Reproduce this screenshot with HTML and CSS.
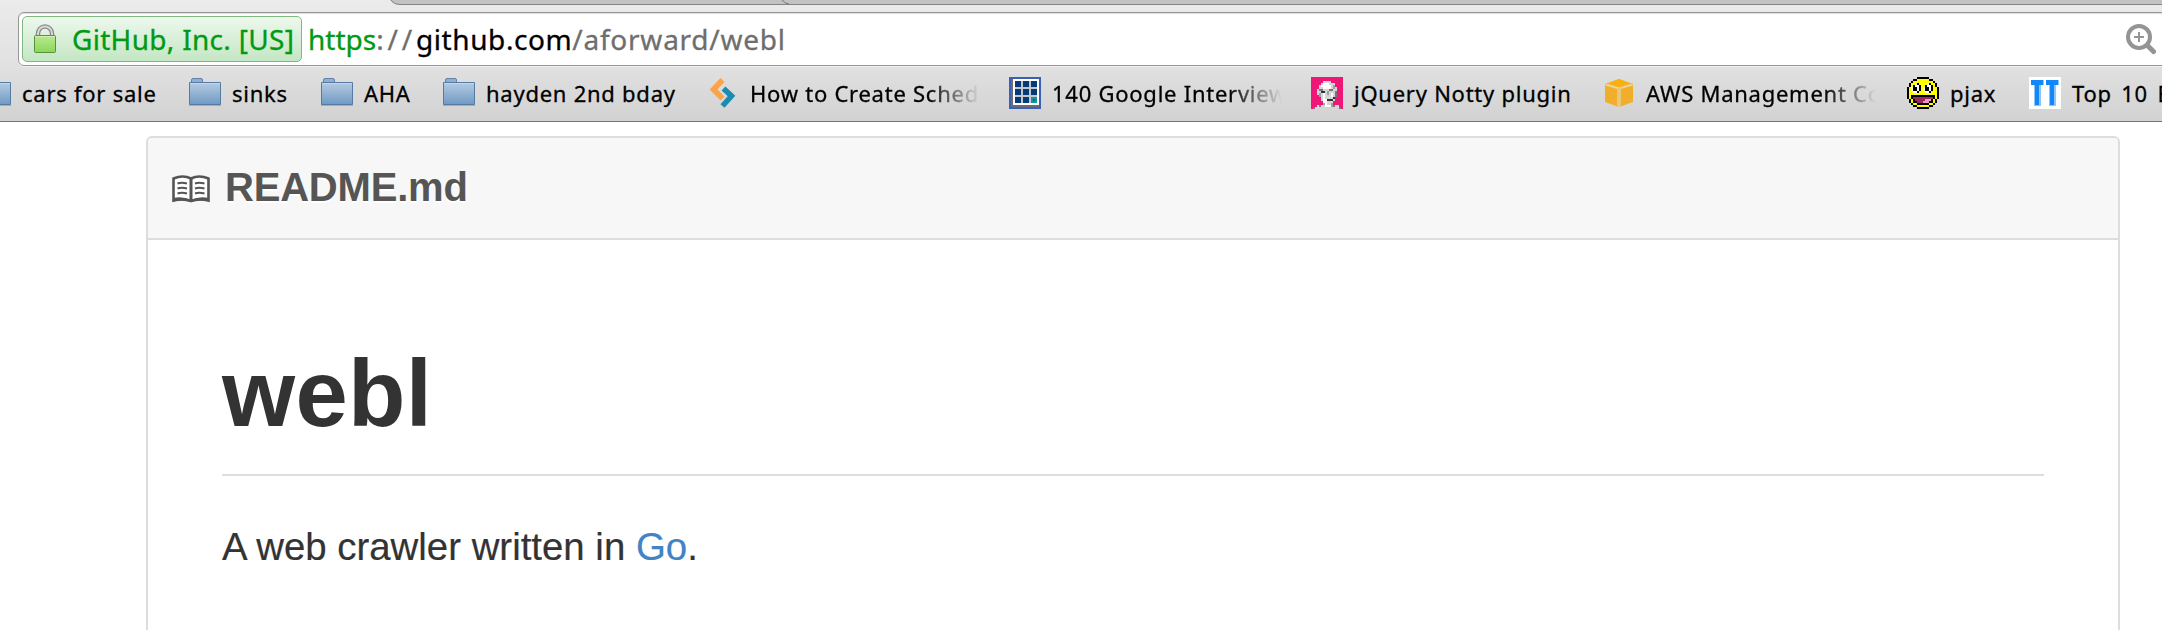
FILE: index.html
```html
<!DOCTYPE html>
<html lang="en">
<head>
<meta charset="utf-8">
<title>aforward/webl</title>
<link rel="stylesheet" href="styles.css">
</head>
<body>
<svg class="defs" width="0" height="0" aria-hidden="true">
  <defs>
    <linearGradient id="folderFill" x1="0" y1="0" x2="0" y2="1"><stop offset="0" stop-color="#b4cbe3"/><stop offset="1" stop-color="#7099c2"/></linearGradient>
    <linearGradient id="lockFill" x1="0" y1="0" x2="0" y2="1"><stop offset="0" stop-color="#b9ea8e"/><stop offset="1" stop-color="#8bd65c"/></linearGradient>
    <symbol id="folder" viewBox="0 0 32 32">
      <path d="M2.500 5.500V3q0-1.500 1.500-1.500h8q1.500 0 1.500 1.500v2.500" fill="#8fafd3" stroke="#6482a6"/>
      <path d="M.5 5.500h31v22H.5z" fill="url(#folderFill)" stroke="#567ba3"/>
      <path d="M1 6.500h30" stroke="#c5d8eb"/>
      <path d="M0 28.500h32" stroke="#a9adb2"/>
    </symbol>
  </defs>
</svg>

<header class="browser">
  <svg class="tabs" viewBox="0 0 2162 5" preserveAspectRatio="none" width="2162" height="5">
    <path d="M390 0q3 4.500 8 4.500H2162V0z" fill="#c2c2c2"/>
    <path d="M391 0q3 4.500 8 4.500H2162" fill="none" stroke="#858585"/>
    <path d="M782 0q3 3.500 7 4" fill="none" stroke="#777"/>
  </svg>
  <div class="omnibox">
    <div class="badge">
      <svg class="lock" viewBox="0 0 24 30" width="24" height="30">
        <path d="M5 13V9.500a7 7 0 0 1 14 0V13" fill="none" stroke="#8a8a8a" stroke-width="4.500"/>
        <path d="M5 13V9.500a7 7 0 0 1 14 0V13" fill="none" stroke="#d6d6d6" stroke-width="2"/>
        <rect x="1.500" y="11.500" width="21" height="17" rx="1" fill="url(#lockFill)" stroke="#559439"/>
        <path d="M2.500 12.500h19" stroke="#d0f2b4"/>
      </svg>
      <span>GitHub, Inc. [US]</span>
    </div>
    <div class="url"><span class="scheme">https</span><span class="sep">://</span><span class="host">github.com</span><span class="path">/aforward/webl</span></div>
    <svg class="zoom" viewBox="0 0 32 32" width="32" height="32">
      <circle cx="14" cy="14" r="11" fill="none" stroke="#949494" stroke-width="4"/>
      <path d="M22.500 22.500L28.500 28.500" stroke="#949494" stroke-width="5" stroke-linecap="round"/>
      <path d="M14 9v10M9 14h10" stroke="#949494" stroke-width="2"/>
    </svg>
  </div>
  <nav class="bookmarks">
    <a class="bm w210"><svg><use href="#folder"/></svg><span>cars for sale</span></a>
    <a class="bm w132"><svg><use href="#folder"/></svg><span>sinks</span></a>
    <a class="bm w122"><svg><use href="#folder"/></svg><span>AHA</span></a>
    <a class="bm w266"><svg><use href="#folder"/></svg><span>hayden 2nd bday</span></a>
    <a class="bm near w300"><svg viewBox="0 0 32 32">
      <path d="M13.500 3L4.500 12.500l9 9" fill="none" stroke="#fda345" stroke-width="5.500"/>
      <path d="M14.500 11.500l8 7.500-9 10" fill="none" stroke="#1d8bb0" stroke-width="5.500"/>
    </svg><span class="fade">How to Create Sched</span></a>
    <a class="bm w302"><svg viewBox="0 0 32 32" shape-rendering="crispEdges">
      <path d="M0 0h32v32H0z" fill="#3c5fb8"/><path d="M2 2h28v28H2z" fill="#6c6c70"/><path d="M4 2h26v26H4z" fill="#fff"/>
      <path d="M6 4h22v22H6z" fill="#c4c8cc"/>
      <path d="M6 4h6v6H6zM14 4h6v6h-6zM22 4h6v6h-6zM6 12h6v6H6zM14 12h6v6h-6zM22 12h6v6h-6zM6 20h6v6H6zM14 20h6v6h-6z" fill="#053c78"/>
      <path d="M22 20h6v6h-6z" fill="#0a9a9c"/><path d="M24 22h2v2h-2z" fill="#066b8c"/>
    </svg><span class="fade">140 Google Interview</span></a>
    <a class="bm w292"><svg viewBox="0 0 16 16" shape-rendering="crispEdges">
      <path d="M0 0h16v16H0z" fill="#ee1676"/>
      <path d="M6 2h4v1h2v2h1v5h-1v2h-1v2h3v1h1v1H1v-1h2v-1h3v-2H5v-2H4V9H3V6h1V4h1V3h1z" fill="#d5d5d5"/>
      <path d="M6 3h3v1h1v2H6V5H5V4h1zM6 8h1v3h1v3h2v1H7v-2H6zM10 8h1v2h-1z" fill="#fff"/>
      <path d="M5 7h2v1H5zM8 11h3v-1h1v1h-1v1H8z" fill="#333"/>
      <path d="M4 6h2v1H4zM9 6h2v1H9zM12 7h1v3h-1zM1 15h1v1H1zM14 15h1v1h-1zM4 14h1v1H4zM11 14h1v1h-1z" fill="#777"/>
      <path d="M11 4h1v2h-1zM4 8h1v2H4zM8 7h1v2H8zM6 13h1v1H6zM10 13h1v2h-1z" fill="#a0a0a0"/>
    </svg><span>jQuery Notty plugin</span></a>
    <a class="bm w304"><svg viewBox="0 0 32 32">
      <path d="M2 7l14-5 14 5v18l-14 5-14-5z" fill="#f0ae2a"/>
      <path d="M3 7l13-5 13 5-13 4z" fill="#f9b112"/>
      <path d="M2.500 7.500L16 11.500l13.500-4" fill="none" stroke="#ecd59b" stroke-width="2"/>
      <path d="M16 11v19" stroke="#e8c77e" stroke-width="4"/>
    </svg><span class="fade">AWS Management Co</span></a>
    <a class="bm w122"><svg viewBox="0 0 16 16" shape-rendering="crispEdges">
      <path d="M5 0h6v1h2v1h1v1h1v2h1v6h-1v2h-1v1h-1v1h-2v1H5v-1H3v-1H2v-1H1v-2H0V5h1V3h1V2h1V1h2z" fill="#000"/>
      <path d="M5 1h6v1h2v1h1v2h1v6h-1v2h-1v1h-2v1H5v-1H3v-1H2v-2H1V5h1V3h1V2h2z" fill="#ff0"/>
      <path d="M4 3h2v1h1v3H6v1H3V7H2V5h1V4h1zM10 3h2v1h1v3h-1v1H9V7H8V5h1V4h1z" fill="#000"/>
      <path d="M4 3h1v1H4zM4 4h2v3H5V5H4zM2 5h1v2H2zM3 7h2v1H3zM10 3h1v1h-1zM10 4h2v3h-1V5h-1zM8 5h1v2H8zM9 7h2v1H9z" fill="#fff"/>
      <path d="M2 9h12v2h-1v2h-2v1H5v-1H3v-2H2z" fill="#000"/>
      <path d="M3 10h10v1h-1v1h-1v1H5v-1H4v-1H3z" fill="#9b2862"/><path d="M8 12h1v-1h3v1h-1v1H8z" fill="#ec9ac0"/>
    </svg><span>pjax</span></a>
    <a class="bm last"><svg viewBox="0 0 32 32" shape-rendering="crispEdges">
      <path d="M0 0h32v32H0z" fill="#fff"/>
      <path d="M2 3h13v5H2zM17 3h13v5H17zM5 8h7v21H5zM20 8h7v21h-7z" fill="#8cc6fd"/>
      <path d="M2 3h12v5H2zM17 3h12v5H17zM6 6h4v22H6zM21 6h4v22h-4z" fill="#1386fa"/>
    </svg><span>Top 10 B</span></a>
  </nav>
</header>

<main class="readme">
  <div class="readme-head">
    <svg class="book" viewBox="0 0 38 28" width="38" height="28">
      <path d="M1.500 3.500Q11-.5 19 3.500q8-4 17.500 0v22q-9.500-2.500-17.500.5-8-3-17.500-.5z" fill="#fff" stroke="#555" stroke-width="2.600"/>
      <path d="M1 23q10-2 18 2 8-4 18-2v3.500q-10-2-18 .5-8-2.500-18-.5z" fill="#555"/>
      <path d="M19 3.500v22" stroke="#555" stroke-width="3"/>
      <path d="M5.500 8.500q4-1.500 9.500 0M5.500 13.500q4-1.500 9.500 0M5.500 18.500q4-1.500 9.500 0M23 8.500q4-1.500 9.500 0M23 13.500q4-1.500 9.500 0M23 18.500q4-1.500 9.500 0" fill="none" stroke="#555" stroke-width="2.200"/>
    </svg>
    <span>README.md</span>
  </div>
  <article class="readme-body">
    <h1>webl</h1>
    <p>A web crawler written in <a>Go</a>.</p>
  </article>
</main>
</body>
</html>
```
FILE: styles.css
```css
* { box-sizing: border-box; }

body {
  margin: 0;
  height: 630px;
  overflow: hidden;
  background: #fff;
  font-family: "Liberation Sans", Arial, sans-serif;
}

.defs { position: absolute; }

.browser {
  height: 122px;
  overflow: hidden;
  background: linear-gradient(#ebebeb, #e2e2e2 50%, #d2d2d2);
  border-bottom: 1px solid #747474;
  font-family: "Noto Sans", "Open Sans", sans-serif;
  color: #000;
  -webkit-text-stroke-width: 0.3px;
}

.tabs { display: block; }

.omnibox {
  display: flex;
  align-items: center;
  height: 54px;
  margin: 7px -10px 0 18px;
  padding: 0 14px 0 3px;
  background: #fff;
  border: 1px solid #969696;
  border-radius: 6px;
  box-shadow: 0 1px 0 #f0f0f0, inset 0 1px 1px #ddd;
}

.badge {
  display: flex;
  align-items: center;
  width: 280px;
  height: 46px;
  padding-left: 10px;
  border: 1px solid #7fb97f;
  border-radius: 5px;
  background: linear-gradient(#edf8ed, #c4e6c4);
  color: #009a14;
  font-size: 28px;
  letter-spacing: 0.3px;
  white-space: nowrap;
}

.lock { margin-right: 15px; flex: none; }

.url {
  flex: 1;
  padding-left: 6px;
  font-size: 28px;
  white-space: nowrap;
  color: #6e6e6e;
}

.scheme { color: #009a14; }
.sep { letter-spacing: 3.8px; }
.host { color: #000; letter-spacing: 0.6px; }
.path { letter-spacing: 0.75px; }

.zoom { flex: none; }

.bookmarks {
  display: flex;
  align-items: center;
  height: 52px;
  margin: 1px 0 0 -21px;
  font-size: 22px;
  letter-spacing: 0.75px;
  white-space: nowrap;
}

.bm {
  display: flex;
  flex: none;
  align-items: center;
  gap: 11px;
}

.near { gap: 9px; }

.bm svg { flex: none; width: 32px; height: 32px; }

.w210 { width: 210px; }
.w132 { width: 132px; }
.w122 { width: 122px; }
.w266 { width: 266px; }
.w300 { width: 300px; }
.w302 { width: 302px; }
.w292 { width: 292px; }
.w304 { width: 304px; }
.last { width: 160px; word-spacing: 3px; }

.fade {
  width: 230px;
  -webkit-mask-image: linear-gradient(to right, #000 77%, transparent);
  mask-image: linear-gradient(to right, #000 77%, transparent);
}

.readme {
  width: 1974px;
  height: 520px;
  margin: 14px 0 0 146px;
  border: 2px solid #ddd;
  border-radius: 6px;
}

.readme-head {
  display: flex;
  align-items: center;
  gap: 15px;
  height: 102px;
  padding: 0 0 2px 24px;
  background: #f7f7f7;
  border-bottom: 2px solid #ddd;
  border-radius: 4px 4px 0 0;
  color: #555;
  font-size: 40px;
  font-weight: bold;
  letter-spacing: -0.2px;
  text-shadow: 0 2px 0 #fff;
}

.book { position: relative; top: 2px; }

.readme-body { padding: 94px 74px 0; color: #333; }

h1 {
  height: 142px;
  margin: 0;
  border-bottom: 2px solid #ddd;
  font-size: 94px;
  line-height: 120px;
  letter-spacing: 0.3px;
}

p {
  margin: 47px 0 0;
  font-size: 38.4px;
  line-height: 48px;
  -webkit-text-stroke-width: 0.2px;
}

p a { color: #4183c4; }
```
